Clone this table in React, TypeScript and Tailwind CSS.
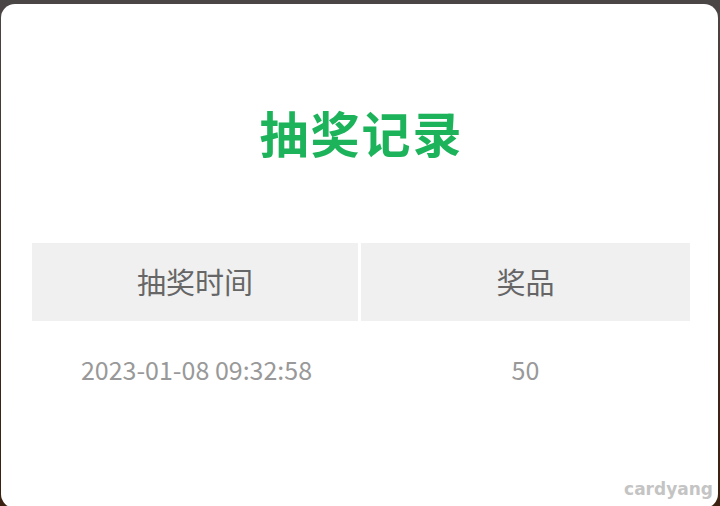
const records = [{ time: '2023-01-08 09:32:58', prize: '50' }];

export default function App() {
  return (
    <div className="w-[720px] h-[506px] overflow-hidden bg-gradient-to-b from-[#4b4646] via-[#3e2a22] to-[#3a2110] pt-[4px] px-[1px] pr-[2px] font-['Noto_Sans_CJK_SC','Noto_Sans',sans-serif]">
      <div className="relative h-[504px] bg-white rounded-[14px] flex flex-col items-center">
        <h1 className="mt-[96px] h-[64px] leading-[64px] text-[49px] font-bold tracking-[2px] ml-[4px] text-[#1db35b]">
          抽奖记录
        </h1>

        <table className="mt-[79px] w-[658px] ml-[3px] border-separate border-spacing-0 table-fixed">
          <thead>
            <tr>
              <th className="w-[329px] h-[78px] bg-[#f0f0f0] text-[29px] font-normal text-[#666] border-r-[3px] border-white">
                抽奖时间
              </th>
              <th className="h-[78px] bg-[#f0f0f0] text-[29px] font-normal text-[#666]">奖品</th>
            </tr>
          </thead>
          <tbody>
            {records.map((r, i) => (
              <tr key={i}>
                <td className="h-[98px] text-center text-[25px] text-[#999]">{r.time}</td>
                <td className="h-[98px] text-center text-[25px] text-[#999]">{r.prize}</td>
              </tr>
            ))}
          </tbody>
        </table>

        <span className="absolute right-[5px] bottom-[6px] text-[17px] font-bold text-[#c4c4c4] font-['DejaVu_Sans',sans-serif]">
          cardyang
        </span>
      </div>
    </div>
  );
}
